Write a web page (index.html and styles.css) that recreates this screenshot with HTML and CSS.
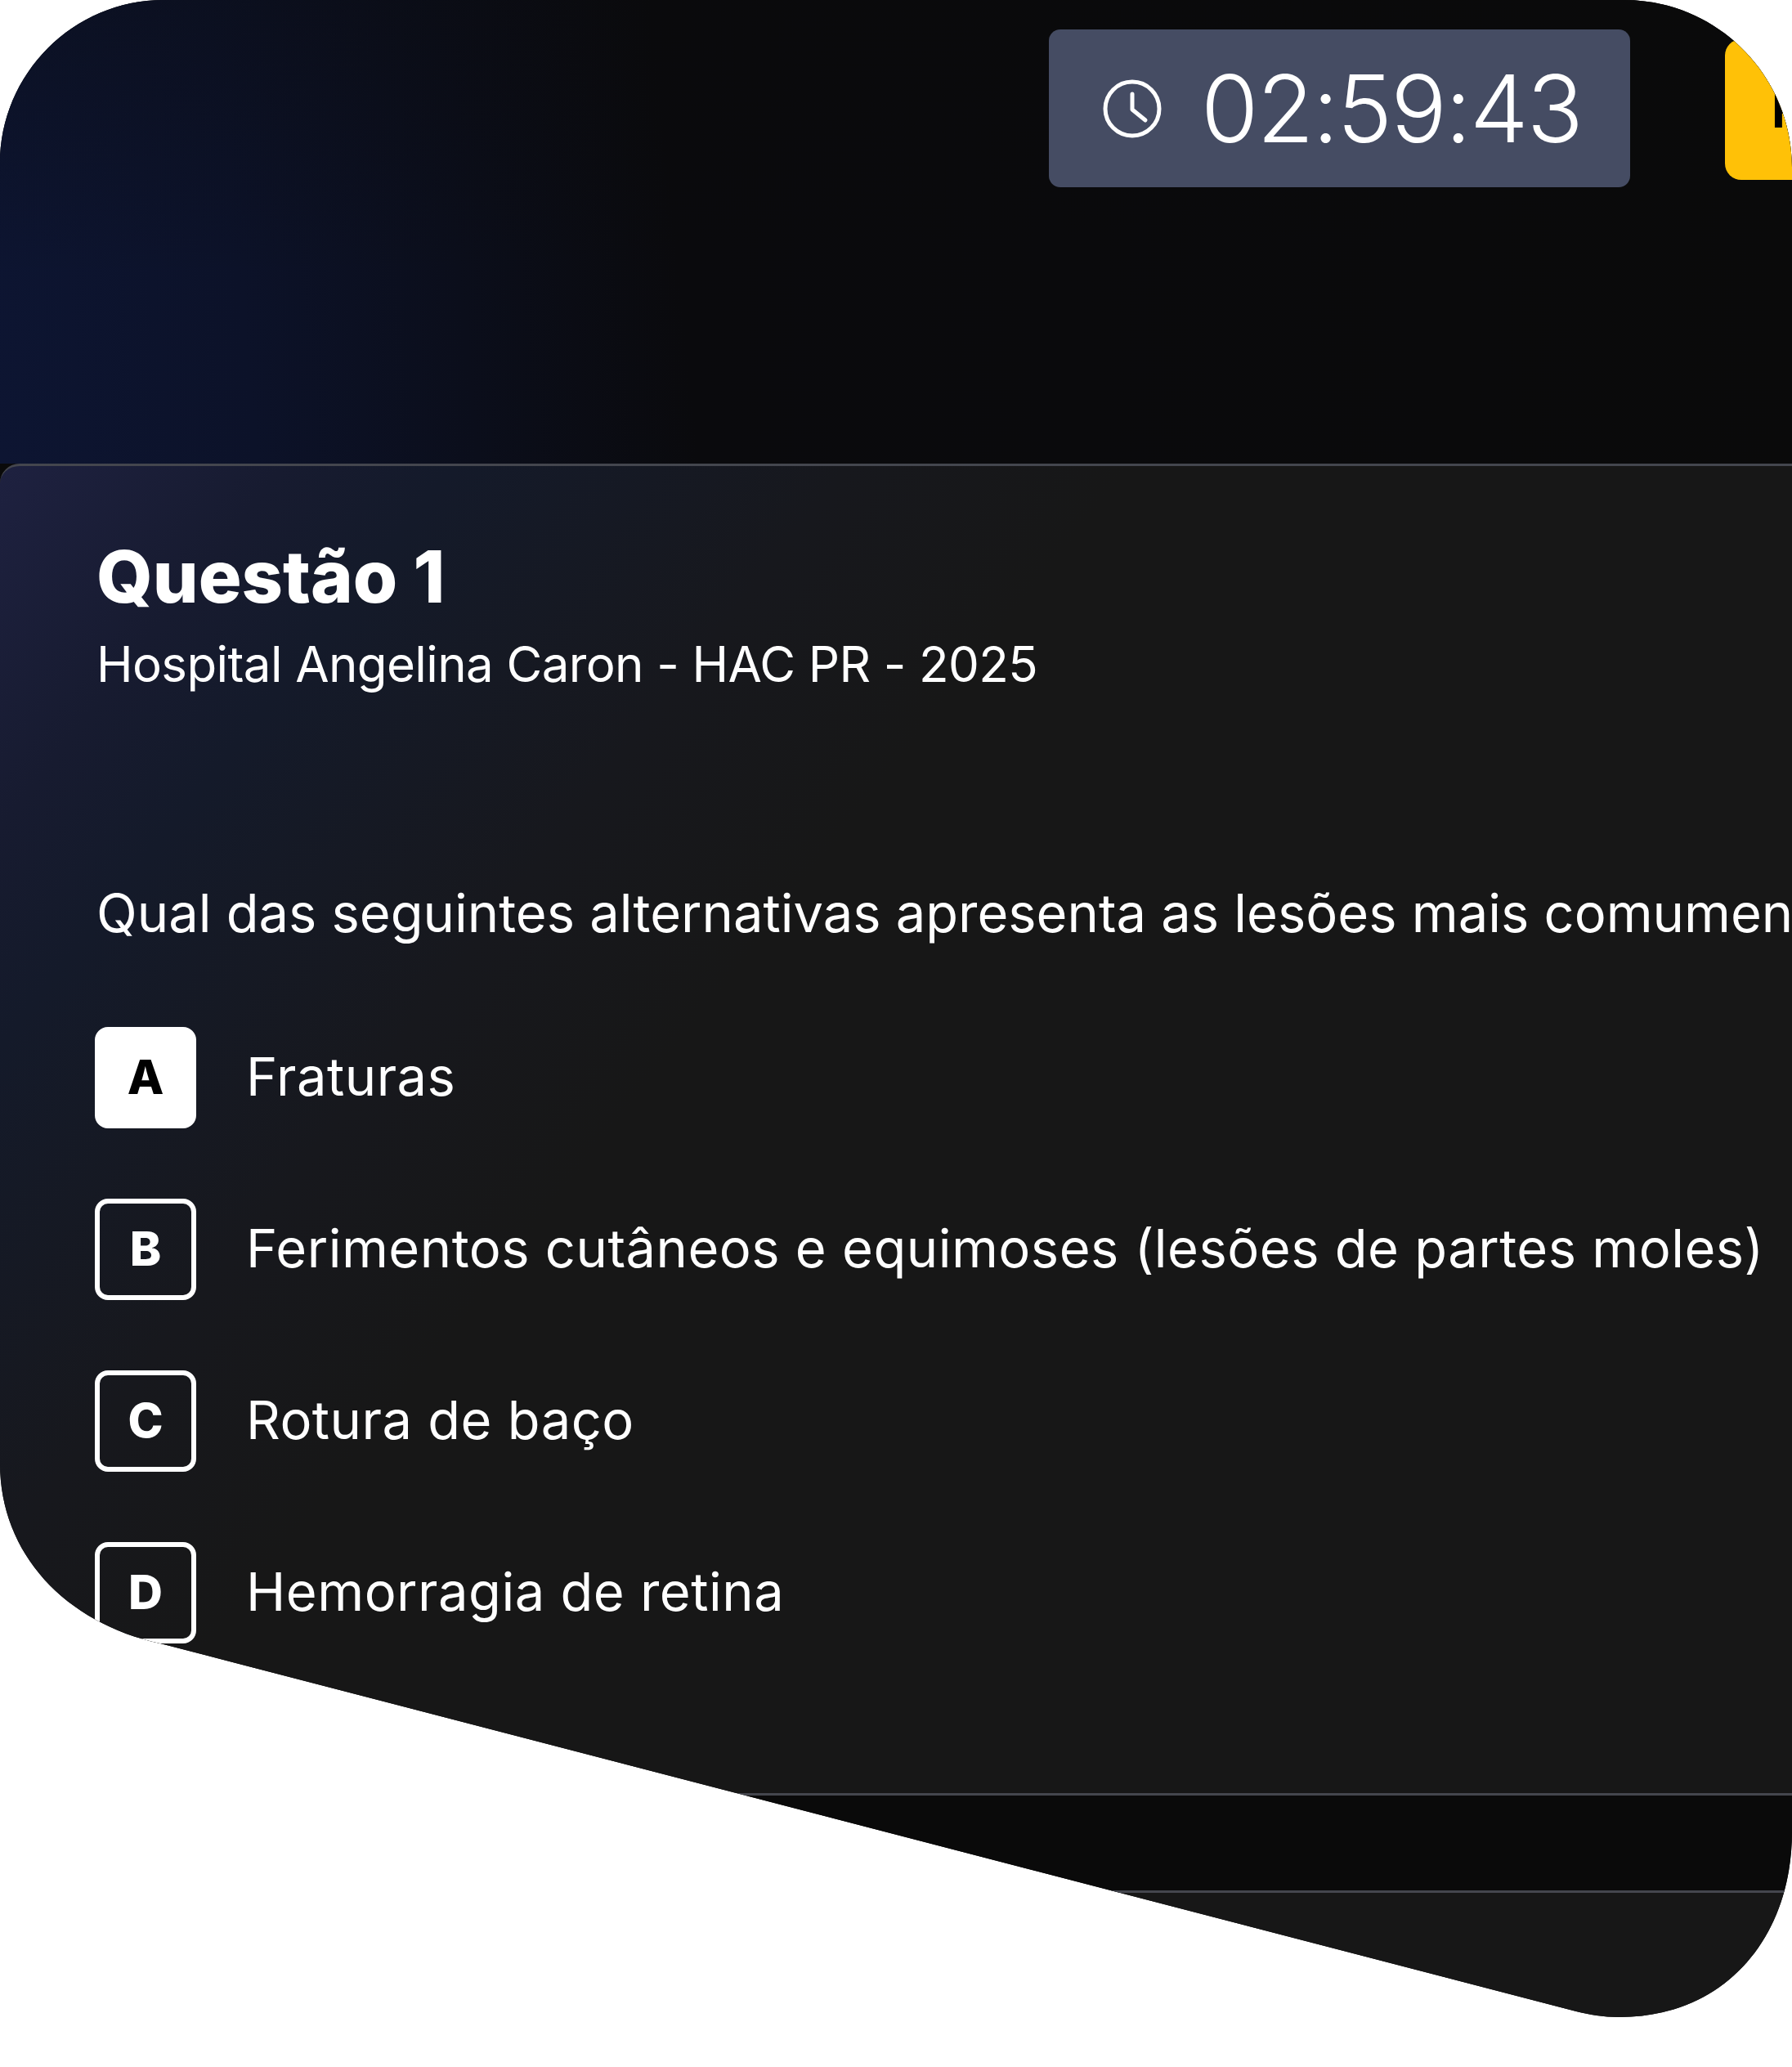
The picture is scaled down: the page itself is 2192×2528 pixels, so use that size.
FILE: index.html
```html
<!DOCTYPE html>
<html lang="pt-BR">
<head>
    <meta charset="UTF-8">
    <title>Questão 1</title>
    <link rel="stylesheet" href="styles.css">
</head>
<body>
    <div class="screen">
        <header class="topbar">
            <div class="timer">
                <svg class="timer-icon" viewBox="0 0 72 72" fill="none" stroke="currentColor" stroke-width="5" stroke-linecap="round" stroke-linejoin="round">
                    <circle cx="36" cy="36" r="33"/>
                    <path d="M36 18v19l16 13"/>
                </svg>
                <span class="timer-value">02:59:43</span>
            </div>
            <button class="finish-button">Finalizar</button>
        </header>

        <main class="question-card">
            <h1 class="question-title">Questão 1</h1>
            <p class="question-source">Hospital Angelina Caron - HAC PR - 2025</p>
            <p class="question-text">Qual das seguintes alternativas apresenta as lesões mais comumente encontradas</p>

            <div class="options">
                <div class="option">
                    <span class="option-letter selected">A</span>
                    <span class="option-text">Fraturas</span>
                </div>
                <div class="option">
                    <span class="option-letter">B</span>
                    <span class="option-text">Ferimentos cutâneos e equimoses (lesões de partes moles)</span>
                </div>
                <div class="option">
                    <span class="option-letter">C</span>
                    <span class="option-text">Rotura de baço</span>
                </div>
                <div class="option">
                    <span class="option-letter">D</span>
                    <span class="option-text">Hemorragia de retina</span>
                </div>
            </div>
        </main>

        <div class="gap-strip"></div>
        <footer class="bottom-bar"></footer>
    </div>
</body>
</html>
```

FILE: styles.css
```css
* {
    margin: 0;
    padding: 0;
    box-sizing: border-box;
}

body {
    background: #ffffff;
    font-family: 'Inter', 'Noto Sans', sans-serif;
    color: #ffffff;
    overflow: hidden;
}

/* Outer shape, the whole page is cut to this */
.screen {
    width: 2192px;
    height: 2528px;
    display: flex;
    flex-direction: column;
    background: #0a0a0a;
    overflow: hidden;
    clip-path: path('M200 0 H1987 C2100 0 2192 92 2192 205 V2240 C2192 2370 2110 2467 1981 2467 C1960 2467 1945 2464 1928 2460 L196 2010 C80 1985 0 1900 0 1790 V200 C0 90 90 0 200 0 Z');
}

/* Top bar */
.topbar {
    height: 567px;
    flex-shrink: 0;
    display: flex;
    align-items: flex-start;
    gap: 116px;
    padding: 36px 0 0 1283px;
    background:
        linear-gradient(180deg, rgba(10, 10, 10, 0.3) 0%, rgba(10, 10, 10, 0) 60%),
        linear-gradient(84deg, #0d1532 0%, #0c1229 14%, #0b0e1b 26%, #0a0a0d 38%, #0a0a0a 100%);
}

.timer {
    width: 711px;
    height: 193px;
    flex-shrink: 0;
    display: flex;
    align-items: center;
    gap: 48px;
    padding-left: 66px;
    background: #454c63;
    border-radius: 14px;
}

.timer-icon {
    width: 72px;
    height: 72px;
    flex-shrink: 0;
}

.timer-value {
    font-size: 114px;
    font-weight: 300;
    line-height: 1;
    letter-spacing: -2px;
}

.finish-button {
    width: 400px;
    height: 172px;
    flex-shrink: 0;
    margin-top: 12px;
    border: none;
    border-radius: 20px;
    background: #ffc107;
    color: #000000;
    font-family: inherit;
    font-size: 60px;
    font-weight: 700;
    text-align: left;
    padding-left: 57px;
}

/* Question card */
.question-card {
    height: 1629px;
    flex-shrink: 0;
    padding: 83px 0 0 116px;
    border-top: 3px solid #44464e;
    border-bottom: 3px solid #44464e;
    border-top-left-radius: 24px;
    background: linear-gradient(128deg, #1e2140 0%, #171b30 10%, #141a2a 16%, #17181d 30%, #171717 40%);
    white-space: nowrap;
}

.question-title {
    margin-left: 2px;
    font-size: 88px;
    font-weight: 800;
    line-height: 104px;
}

.question-source {
    margin-top: 15px;
    margin-left: 2px;
    font-size: 60px;
    line-height: 80px;
    letter-spacing: -0.6px;
}

.question-text {
    margin-top: 225px;
    margin-left: 2px;
    font-size: 65px;
    line-height: 80px;
}

.options {
    margin-top: 99px;
    display: flex;
    flex-direction: column;
    gap: 86px;
}

.option {
    display: flex;
    align-items: center;
    gap: 61px;
}

.option-letter {
    width: 124px;
    height: 124px;
    flex-shrink: 0;
    display: flex;
    align-items: center;
    justify-content: center;
    padding-bottom: 3px;
    border: 6px solid #ffffff;
    border-radius: 16px;
    font-size: 58px;
    font-weight: 800;
}

.option-letter.selected {
    background: #ffffff;
    color: #000000;
}

.option-text {
    padding-bottom: 4px;
    font-size: 65px;
    letter-spacing: 0.5px;
}

/* Bottom */
.gap-strip {
    height: 116px;
    flex-shrink: 0;
    background: #0a0a0a;
}

.bottom-bar {
    flex: 1;
    border-top: 3px solid #44464e;
    background: #171717;
}
```
